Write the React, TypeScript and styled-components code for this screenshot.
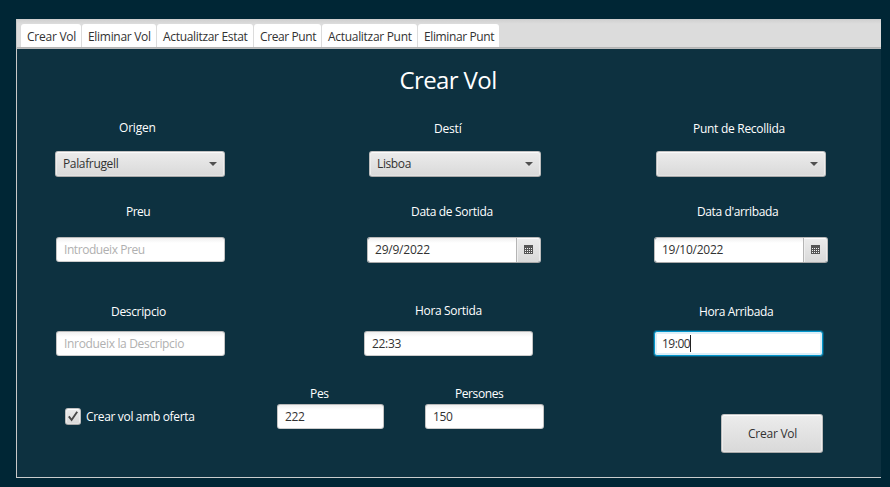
import React from "react";
import styled, { createGlobalStyle, css } from "styled-components";

const Global = createGlobalStyle`
  * { box-sizing: border-box; }
  body { margin: 0; background: #002635; }
`;

const Window = styled.div`
  width: 890px;
  height: 487px;
  padding: 19px 9px 9px 16px;
  overflow: hidden;
  background: #002635;
  color: #323232;
  font: 12px/18px "Open Sans", "Noto Sans", sans-serif;
  white-space: nowrap;
`;

const TabPane = styled.div`
  display: flex;
  flex-direction: column;
  height: 459px;
  background: #0d3140;
  border-left: 1px solid #c8c8c8;
  border-bottom: 1px solid #c8cccd;
`;

const TabBar = styled.div`
  display: flex;
  align-items: flex-end;
  gap: 1px;
  height: 30px;
  margin-left: -1px;
  padding: 0 0 1px 4px;
  background: linear-gradient(#cfcfcf, #dcdcdc 5px, #dcdcdc);
  border-left: 1px solid #c8c8c8;
  border-bottom: 1px solid #bdbdbd;
  box-shadow: inset 0 -1px #b4b4b4;
`;

const Tab = styled.div<{ $width: number }>`
  width: ${(p) => p.$width}px;
  height: 23px;
  padding: 4px 0 0 6px;
  background: #fff;
  border-radius: 3px 3px 0 0;
`;

const Text = styled.span<{ $track?: number }>`
  letter-spacing: ${(p) => p.$track ?? 0}px;
`;

const Title = styled.h1`
  margin: 15px 0 0;
  padding-right: 2px;
  color: #fff;
  font-size: 24px;
  font-weight: 400;
  line-height: 32px;
  letter-spacing: -0.6px;
  text-align: center;
`;

const FormRow = styled.div<{ $gap: number }>`
  display: grid;
  grid-template-columns: 309px 290px 1fr;
  margin-top: ${(p) => p.$gap}px;
  padding-left: 38px;
`;

const FooterRow = styled.div`
  display: flex;
  align-items: flex-start;
  margin-top: 29px;
  padding-left: 48px;
`;

const Label = styled.div<{ $height: number; $indent: number; $drop?: number }>`
  height: ${(p) => p.$height}px;
  padding: ${(p) => p.$drop ?? 0}px 0 0 ${(p) => p.$indent}px;
  color: #fff;
`;

const raised = css`
  border: 1px solid;
  border-color: #c2c2c2 #bcbcbc #a9a9a9;
  border-radius: 3px;
  background: linear-gradient(#ececec, #d9d9d9);
  box-shadow: inset 0 1px #fbfbfb, inset 1px 0 #ededed, inset -1px 0 #ededed, inset 0 -1px #e2e2e2;
`;

const Combo = styled.div<{ $width: number; $left?: number }>`
  ${raised}
  display: flex;
  align-items: center;
  justify-content: space-between;
  width: ${(p) => p.$width}px;
  height: 26px;
  margin-left: ${(p) => p.$left ?? 0}px;
  padding: 0 7px 0 7px;
`;

const Input = styled.div<{ $width: number; $left?: number; $focused?: boolean; $empty?: boolean }>`
  display: flex;
  width: ${(p) => p.$width}px;
  height: 25px;
  margin-left: ${(p) => p.$left ?? 0}px;
  padding: 3px 0 0 7px;
  border: 1px solid;
  border-color: #b9b9b9 #c4c4c4 #cccccc;
  border-radius: 3px;
  background: linear-gradient(#f0f0f0, #fff 5px);
  color: ${(p) => (p.$empty ? "#b0b0b0" : "#323232")};
  ${(p) =>
    p.$focused &&
    css`
      border-color: #0396cc;
      background: #fff;
      box-shadow: inset 0 0 0 2px #dceff8, 0 0 0 1px rgba(3, 158, 211, 0.35);
    `}
`;

const DateField = styled.div`
  display: flex;
  width: 174px;
  height: 26px;
  border: 1px solid;
  border-color: #b9b9b9 #bcbcbc #a9a9a9;
  border-radius: 3px;
  overflow: hidden;
`;

const DateText = styled.div`
  flex: 1;
  padding: 3px 0 0 7px;
  background: linear-gradient(#f0f0f0, #fff 5px);
`;

const DateButton = styled.div`
  display: flex;
  align-items: flex-start;
  width: 24px;
  padding: 7px 0 0 7px;
  border-left: 1px solid #b5b5b5;
  background: linear-gradient(#ececec, #d9d9d9);
  box-shadow: inset 0 1px #fbfbfb, inset 1px 0 #efefef, inset -1px 0 #ededed;
`;

const Caret = styled.span`
  width: 1px;
  height: 17px;
  background: #222;
`;

const CheckRow = styled.div`
  display: flex;
  gap: 5px;
  width: 212px;
  margin-top: 23px;
  color: #fff;
`;

const CheckBox = styled.span`
  ${raised}
  display: flex;
  width: 16px;
  height: 17px;
`;

const Cell = styled.div<{ $left?: number }>`
  margin-left: ${(p) => p.$left ?? 0}px;
`;

const SubmitButton = styled.div`
  ${raised}
  width: 102px;
  height: 39px;
  margin: 29px 0 0 177px;
  padding: 10px 0 0 26px;
`;

const Arrow = () => (
  <svg width="8" height="4" viewBox="0 0 8 4">
    <path d="M0 0h8L4 4z" fill="#505050" />
  </svg>
);

const dots = [1, 3, 5, 7];
const Calendar = () => (
  <svg width="9" height="9" viewBox="0 0 9 9" shapeRendering="crispEdges">
    <path d="M0 0h9v9H0z" fill="#555" />
    {[3, 5, 7].map((y) => dots.map((x) => <rect key={`${x}-${y}`} x={x} y={y} width="1" height="1" fill="#f2f2f2" />))}
  </svg>
);

const Check = () => (
  <svg width="14" height="15" viewBox="0 0 14 15">
    <path d="M2.8 7.4 5.6 11 11.2 2.8" fill="none" stroke="#484848" strokeWidth="1.9" />
  </svg>
);

const tabs = [
  { name: "Crear Vol", width: 60, track: -0.24 },
  { name: "Eliminar Vol", width: 74, track: -0.3 },
  { name: "Actualitzar Estat", width: 96, track: -0.32 },
  { name: "Crear Punt", width: 67, track: -0.4 },
  { name: "Actualitzar Punt", width: 95, track: -0.3 },
  { name: "Eliminar Punt", width: 81, track: -0.38 },
];

export default function App() {
  return (
    <Window>
      <Global />
      <TabPane>
        <TabBar>
          {tabs.map((t) => (
            <Tab key={t.name} $width={t.width}>
              <Text $track={t.track}>{t.name}</Text>
            </Tab>
          ))}
        </TabBar>
        <Title>Crear Vol</Title>

        <FormRow $gap={23}>
          <Cell>
            <Label $height={32} $indent={64}><Text $track={-0.2}>Origen</Text></Label>
            <Combo $width={170}><Text $track={-0.35}>Palafrugell</Text><Arrow /></Combo>
          </Cell>
          <Cell>
            <Label $height={32} $indent={70} $drop={1}><Text $track={-0.2}>Destí</Text></Label>
            <Combo $width={172} $left={5}><Text $track={-0.38}>Lisboa</Text><Arrow /></Combo>
          </Cell>
          <Cell>
            <Label $height={32} $indent={39} $drop={1}><Text $track={-0.28}>Punt de Recollida</Text></Label>
            <Combo $width={170} $left={2}><Text /><Arrow /></Combo>
          </Cell>
        </FormRow>

        <FormRow $gap={26}>
          <Cell>
            <Label $height={34} $indent={71}><Text $track={-0.5}>Preu</Text></Label>
            <Input $width={169} $left={1} $empty><Text $track={-0.43}>Introdueix Preu</Text></Input>
          </Cell>
          <Cell $left={3}>
            <Label $height={34} $indent={44}><Text $track={-0.32}>Data de Sortida</Text></Label>
            <DateField>
              <DateText><Text $track={-0.22}>29/9/2022</Text></DateText>
              <DateButton><Calendar /></DateButton>
            </DateField>
          </Cell>
          <Cell>
            <Label $height={34} $indent={43}><Text $track={-0.38}>Data d'arribada</Text></Label>
            <DateField>
              <DateText><Text $track={-0.25}>19/10/2022</Text></DateText>
              <DateButton><Calendar /></DateButton>
            </DateField>
          </Cell>
        </FormRow>

        <FormRow $gap={39}>
          <Cell>
            <Label $height={29} $indent={56} $drop={1}><Text $track={-0.33}>Descripcio</Text></Label>
            <Input $width={169} $left={1} $empty><Text $track={-0.33}>Inrodueix la Descripcio</Text></Input>
          </Cell>
          <Cell>
            <Label $height={29} $indent={51}><Text $track={-0.33}>Hora Sortida</Text></Label>
            <Input $width={169}><Text $track={-0.3}>22:33</Text></Input>
          </Cell>
          <Cell>
            <Label $height={29} $indent={45} $drop={1}><Text $track={-0.38}>Hora Arribada</Text></Label>
            <Input $width={169} $focused><Text $track={-0.5}>19:00</Text><Caret /></Input>
          </Cell>
        </FormRow>

        <FooterRow>
          <CheckRow>
            <CheckBox><Check /></CheckBox>
            <Text $track={-0.34}>Crear vol amb oferta</Text>
          </CheckRow>
          <Cell>
            <Label $height={19} $indent={33}><Text $track={-0.3}>Pes</Text></Label>
            <Input $width={107}><Text $track={-0.3}>222</Text></Input>
          </Cell>
          <Cell $left={41}>
            <Label $height={19} $indent={30}><Text $track={-0.42}>Persones</Text></Label>
            <Input $width={119}><Text $track={-0.3}>150</Text></Input>
          </Cell>
          <SubmitButton><Text $track={-0.24}>Crear Vol</Text></SubmitButton>
        </FooterRow>
      </TabPane>
    </Window>
  );
}
